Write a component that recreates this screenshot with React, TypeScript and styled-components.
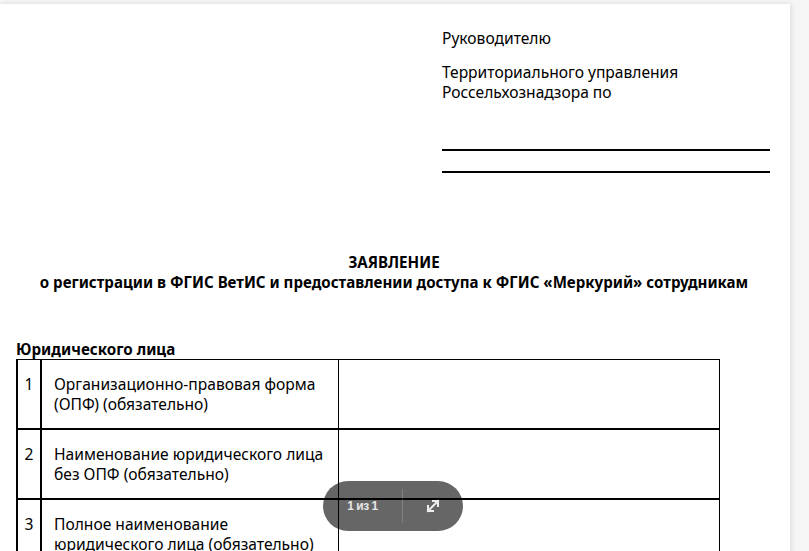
import React from "react";
import styled, { createGlobalStyle } from "styled-components";

const GlobalStyle = createGlobalStyle`
  html, body {
    margin: 0;
    padding: 0;
    background: #f5f5f5;
    overflow: hidden;
  }
  body {
    font-family: "Noto Sans", "Open Sans", sans-serif;
    color: #000;
  }
`;

const Viewer = styled.div`
  position: relative;
  width: 809px;
  height: 551px;
  padding-top: 4px;
  box-sizing: border-box;
  overflow: hidden;
`;

const Sheet = styled.div`
  width: 790px;
  min-height: 700px;
  background: #fff;
  box-shadow: 1px 0 5px rgba(0, 0, 0, 0.12);
  box-sizing: border-box;
  padding: 24px 0 0 16px;
`;

const Addressee = styled.div`
  margin-left: 426px;
  width: 328px;
  font-size: 15.6px;
  line-height: 20px;
`;

const Para = styled.p<{ $gap?: number }>`
  margin: 0 0 ${(p) => p.$gap ?? 14}px;
`;

const Blank = styled.div<{ $gap: number }>`
  height: 2px;
  background: #000;
  margin-top: ${(p) => p.$gap}px;
`;

const Heading = styled.div`
  margin-top: 79px;
  margin-right: 18px;
  text-align: center;
  font-weight: 700;
  font-size: 15.1px;
  line-height: 20px;
`;

const SectionTitle = styled.div`
  margin-top: 48px;
  font-weight: 700;
  font-size: 15.2px;
  line-height: 19px;
`;

const Table = styled.table`
  border-collapse: collapse;
  width: 704px;
  font-size: 15.6px;
  line-height: 20px;
  border-top: 1px solid #000;
  border-left: 2px solid #000;
  border-right: 1px solid #000;
`;

const Row = styled.tr`
  border-bottom: 2px solid #000;
`;

const NumCell = styled.td`
  width: 22px;
  padding: 14px 0 14px;
  vertical-align: top;
  text-align: center;
  border-right: 2px solid #000;
`;

const TextCell = styled.td`
  width: 284px;
  padding: 14px 0 14px 12px;
  vertical-align: top;
  border-right: 1.5px solid #000;
`;

const ValueCell = styled.td``;

const Pill = styled.div`
  position: absolute;
  left: 323px;
  top: 481px;
  width: 140px;
  height: 50px;
  border-radius: 25px;
  background: rgba(0, 0, 0, 0.6);
  display: flex;
  align-items: center;
`;

const PageCount = styled.span`
  width: 79px;
  text-align: center;
  color: #e6e6e6;
  font-family: "Liberation Sans", Arial, sans-serif;
  font-weight: 700;
  font-size: 12px;
  letter-spacing: -0.5px;
`;

const Divider = styled.span`
  width: 1px;
  height: 34px;
  background: rgba(255, 255, 255, 0.18);
`;

const ExpandButton = styled.span`
  flex: 1;
  display: flex;
  justify-content: center;
  align-items: center;
  color: #eee;
`;

const rows = [
  ["Организационно-правовая форма", "(ОПФ) (обязательно)"],
  ["Наименование юридического лица", "без ОПФ (обязательно)"],
  ["Полное наименование", "юридического лица (обязательно)"],
];

export default function App() {
  return (
    <>
      <GlobalStyle />
      <Viewer>
        <Sheet>
          <Addressee>
            <Para>Руководителю</Para>
            <Para $gap={0}>
              Территориального управления
              <br />
              Россельхознадзора по
            </Para>
            <Blank $gap={47} />
            <Blank $gap={20} />
          </Addressee>
          <Heading>
            ЗАЯВЛЕНИЕ
            <br />
            о регистрации в ФГИС ВетИС и предоставлении доступа к ФГИС «Меркурий» сотрудникам
          </Heading>
          <SectionTitle>Юридического лица</SectionTitle>
          <Table>
            <tbody>
              {rows.map((r, i) => (
                <Row key={i}>
                  <NumCell>{i + 1}</NumCell>
                  <TextCell>
                    {r[0]}
                    <br />
                    {r[1]}
                  </TextCell>
                  <ValueCell />
                </Row>
              ))}
            </tbody>
          </Table>
        </Sheet>
        <Pill>
          <PageCount>1 из 1</PageCount>
          <Divider />
          <ExpandButton>
            <svg width="16" height="16" viewBox="0 0 16 16" fill="none" stroke="currentColor" strokeWidth="2" strokeLinecap="square">
              <path d="M3 13L13 3" />
              <path d="M8 3h5v5" />
              <path d="M3 8v5h5" />
            </svg>
          </ExpandButton>
        </Pill>
      </Viewer>
    </>
  );
}
